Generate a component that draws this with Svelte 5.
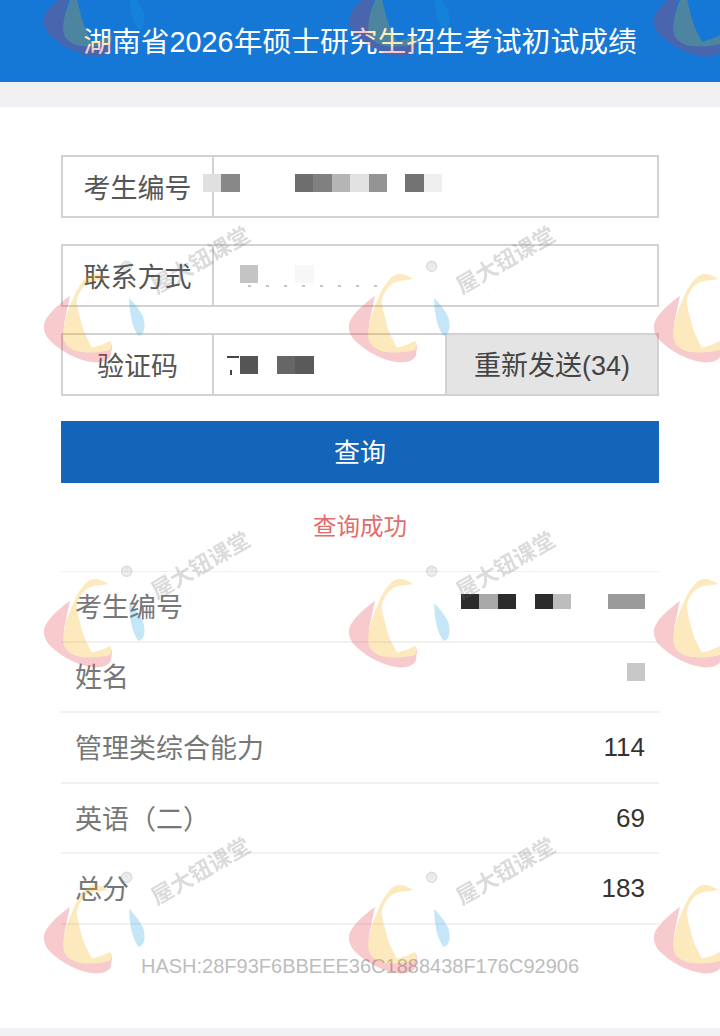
<script>
  const columns = 3;
  const tiles = Array.from({ length: 12 }, (_, i) => ({
    // the first row and the last column only show their logos inside the page
    stamp: i >= columns && i % columns < columns - 1
  }));

  const examId = ['#e0e0e0', '#888', null, null, null, '#6e6e6e', '#808080', '#b5b5b5', '#e2e2e2', '#949494', null, '#737373', '#efefef'];
  const phone = ['#c4c4c4', null, null, '#f7f7f7'];
  const code = ['#555', null, '#666', '#5a5a5a'];
  const resultId = ['#2c2c2c', '#a8a8a8', '#2c2c2c', null, '#2c2c2c', '#bdbdbd', null, null, '#9a9a9a', '#9a9a9a'];
  const specks = Array.from({ length: 8 });

  const scores = [
    { label: '考生编号', mosaic: resultId },
    { label: '姓名', mosaic: ['#c8c8c8'] },
    { label: '管理类综合能力', value: '114' },
    { label: '英语（二）', value: '69' },
    { label: '总分', value: '183' }
  ];
</script>

{#snippet mosaicRow(cells)}
  <span class="mosaic">
    {#each cells as color}
      <i style:background={color}></i>
    {/each}
  </span>
{/snippet}

<div class="page">
  <header class="top-bar">湖南省2026年硕士研究生招生考试初试成绩</header>
  <div class="band"></div>

  <main class="panel">
    <div class="field">
      <div class="field-label">考生编号</div>
      <div class="field-value id-value">{@render mosaicRow(examId)}</div>
    </div>

    <div class="field">
      <div class="field-label">联系方式</div>
      <div class="field-value phone-value">
        {@render mosaicRow(phone)}
        <div class="specks">
          {#each specks as _}<i></i>{/each}
        </div>
      </div>
    </div>

    <div class="field">
      <div class="field-label">验证码</div>
      <div class="field-value code-value">
        <span class="tick-a"></span>
        <span class="tick-b"></span>
        {@render mosaicRow(code)}
      </div>
      <button class="resend">重新发送(34)</button>
    </div>

    <button class="query">查询</button>
    <div class="message">查询成功</div>

    <div class="results">
      {#each scores as row}
        <div class="result-row">
          <span class="result-label">{row.label}</span>
          {#if row.mosaic}
            <span class="result-mosaic">{@render mosaicRow(row.mosaic)}</span>
          {:else}
            <span class="result-value">{row.value}</span>
          {/if}
        </div>
      {/each}
    </div>

    <div class="hash">HASH:28F93F6BBEEE36C1888438F176C92906</div>
  </main>
  <div class="foot"></div>

  <div class="watermarks" aria-hidden="true">
    {#each tiles as tile}
      <svg class="tile" width="230" height="130" viewBox="0 -60 230 130">
        <g class="logo">
          <path fill="#e2323c" d="M26 21.7 C12 32 2 42 0 50 C-1 58 3 64 7.7 68.3 C15 75 23 80 31 83.3 C40 87 48 89 54.3 88.3 C62 87.5 66 85 67 81 L68.3 70 L66 74 L40 76 L24 70 L20 50 Z" />
          <path fill="#f4ad00" d="M64.3 5 C60 2 55 0 51 0 C47 0 43 2 41 5 C37 9 34 14 31 20 C27 30 23 38 21 46.7 C19.5 53 19 58 19.3 63.3 C20 69 24 73 27.7 75 C32 77.5 36 78 41 78.3 C50 79 60 78 66 76 L68 70 L66 66.7 C62 69 58 71 54.3 71.7 C52 72.5 50 73.5 47.7 73.3 C45 68 43 64 41 60 C39 54 37 49 36 43 C34 37 33 31 32.7 26.7 C34 21 36 17 39.3 13.3 C42 10 46 7.5 51 6.7 C56 6 60 6 64.3 5 Z" />
          <path fill="#1a9fdf" d="M85.3 24 C90 29 96 36 99.3 43.3 C101 49 101 54 99.3 58.3 C98 61 96 62 94.3 61.7 C91 57 89 52 87.7 46.7 C86 39 85 31 85.3 24 Z" />
        </g>
        {#if tile.stamp}
          <g class="stamp">
            <circle cx="82.7" cy="-7.7" r="5" />
            <text class="reg" x="82.7" y="-4.6" text-anchor="middle">®</text>
            <g transform="rotate(-30 157 -13)">
              <text class="brand" x="157" y="-6" text-anchor="middle">屋大钮课堂</text>
              <text class="dots" x="157" y="9" text-anchor="middle">· · · · · · · ·</text>
            </g>
          </g>
        {/if}
      </svg>
    {/each}
  </div>
</div>

<style>
  :global(body) {
    margin: 0;
    background: #fff;
  }

  .page {
    position: relative;
    width: 720px;
    height: 1036px;
    overflow: hidden;
    display: flex;
    flex-direction: column;
    font-family: "Liberation Sans", "Noto Sans CJK SC", sans-serif;
    background: #fff;
  }

  .top-bar {
    height: 82px;
    flex: none;
    box-sizing: border-box;
    padding-top: 2px;
    background: #1577d6;
    color: #fff;
    font-size: 28.8px;
    line-height: 80px;
    text-align: center;
    white-space: nowrap;
  }

  .band {
    height: 25px;
    flex: none;
    background: #f1f1f3;
  }

  .panel {
    flex: 1;
    display: flex;
    flex-direction: column;
    padding: 48px 61px 0;
  }

  .field {
    display: flex;
    box-sizing: border-box;
    height: 63px;
    flex: none;
    margin-bottom: 26px;
    border: 2px solid #d2d2d2;
    color: #555;
    font-size: 27px;
  }

  .field:nth-child(3) {
    margin-bottom: 25px;
  }

  .field-label {
    flex: none;
    width: 151px;
    box-sizing: border-box;
    padding-bottom: 1px;
    border-right: 2px solid #d2d2d2;
    display: flex;
    align-items: center;
    justify-content: center;
  }

  .field-value {
    position: relative;
    flex: 1;
    display: flex;
    flex-direction: column;
    justify-content: center;
  }

  .id-value {
    margin-left: -11px;
    padding-bottom: 7px;
  }

  .phone-value {
    padding-left: 26px;
    gap: 2px;
  }

  .code-value {
    padding-left: 26px;
  }

  .specks {
    display: flex;
    gap: 15px;
    margin-left: 8px;
  }

  .specks i {
    width: 3px;
    height: 2px;
    background: #c4c4c4;
  }

  .tick-a {
    position: absolute;
    left: 13px;
    top: 21px;
    width: 12px;
    height: 2px;
    background: #444;
  }

  .tick-b {
    position: absolute;
    left: 16px;
    top: 35px;
    width: 2px;
    height: 5px;
    background: #444;
  }

  .mosaic {
    display: flex;
    height: 18px;
  }

  .mosaic i {
    display: block;
    flex: none;
    width: 18.4px;
  }

  .resend {
    flex: none;
    width: 212px;
    margin: 0;
    padding: 0 0 3px;
    border: 0;
    border-left: 2px solid #d2d2d2;
    background: #e4e4e4;
    color: #444;
    font: inherit;
    white-space: nowrap;
  }

  .query {
    flex: none;
    height: 62px;
    margin: 0;
    padding: 0 0 4px;
    border: 0;
    background: #1265b8;
    color: #fff;
    font: inherit;
    font-size: 26px;
  }

  .message {
    flex: none;
    height: 88px;
    line-height: 88px;
    text-align: center;
    color: #e06c6c;
    font-size: 23.5px;
  }

  .results {
    flex: none;
    border-top: 1px solid #f0f0f0;
  }

  .result-row {
    display: flex;
    justify-content: space-between;
    align-items: center;
    box-sizing: border-box;
    height: 70.6px;
    padding: 0 14px;
    border-bottom: 2px solid #f1f1f1;
  }

  .result-label {
    padding-bottom: 2px;
    color: #777;
    font-size: 27px;
  }

  .result-value {
    color: #333;
    font-size: 26px;
  }

  .result-mosaic {
    margin-bottom: 9px;
  }

  .result-row:first-child .mosaic {
    height: 15px;
  }

  .hash {
    flex: none;
    margin-top: 28px;
    text-align: center;
    color: #bdbdbd;
    font-size: 20px;
    line-height: 26px;
  }

  .foot {
    height: 8px;
    flex: none;
    background: #f1f1f3;
  }

  .watermarks {
    position: absolute;
    inset: 0;
    overflow: hidden;
    pointer-events: none;
    display: grid;
    grid-template-columns: repeat(3, 305px);
    grid-auto-rows: 305.5px;
    padding-left: 44px;
    margin-top: -92px;
    height: 1128px;
  }

  .tile {
    display: block;
    overflow: visible;
  }

  .logo {
    opacity: 0.25;
    filter: blur(0.6px);
  }

  .stamp {
    fill: #777;
    opacity: 0.26;
    filter: blur(0.6px);
    font-family: "Liberation Sans", "Noto Sans CJK SC", sans-serif;
  }

  .stamp circle {
    fill: #777;
    fill-opacity: 0.4;
    stroke: #777;
    stroke-width: 1.5;
  }

  .reg {
    font-size: 9px;
  }

  .brand {
    font-size: 22px;
    font-weight: 700;
  }

  .dots {
    font-size: 8px;
    letter-spacing: 2px;
    opacity: 0.6;
  }
</style>
